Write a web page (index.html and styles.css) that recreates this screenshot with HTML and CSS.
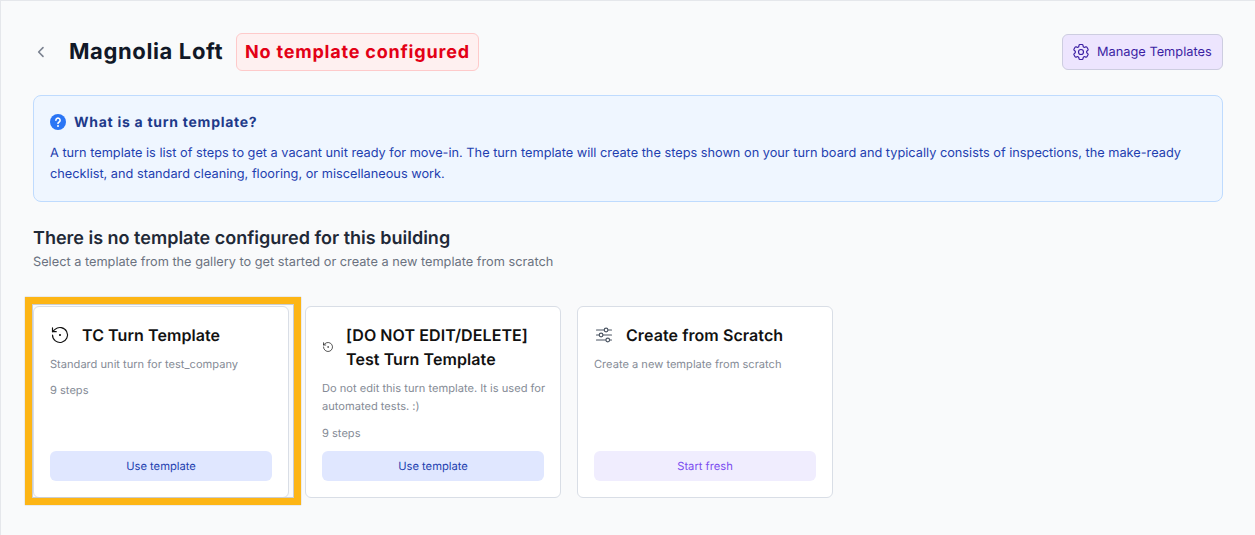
FILE: index.html
```html
<!DOCTYPE html>
<html lang="en">
<head>
<meta charset="utf-8">
<title>Magnolia Loft</title>
<link rel="stylesheet" href="styles.css">
</head>
<body>
<main class="page">
  <header class="top">
    <div class="top-left">
      <button class="back" aria-label="Back">
        <svg viewBox="0 0 24 24" width="16" height="16" fill="none" stroke="#7b8290" stroke-width="2.4" stroke-linecap="round" stroke-linejoin="round"><path d="M15 5.5 8.5 12l6.5 6.5"/></svg>
      </button>
      <h1 class="title">Magnolia Loft</h1>
      <span class="badge">No template configured</span>
    </div>
    <button class="manage">
      <svg viewBox="0 0 24 24" width="20" height="20" fill="none" stroke="#3b1fa3" stroke-width="1.4" stroke-linecap="round" stroke-linejoin="round"><path d="M9.594 3.94c.09-.542.56-.94 1.11-.94h2.593c.55 0 1.02.398 1.11.94l.213 1.281c.063.374.313.686.645.87.074.04.147.083.22.127.325.196.72.257 1.075.124l1.217-.456a1.125 1.125 0 0 1 1.37.49l1.296 2.247a1.125 1.125 0 0 1-.26 1.431l-1.003.827c-.293.241-.438.613-.43.992a7.723 7.723 0 0 1 0 .255c-.008.378.137.75.43.991l1.004.827c.424.35.534.955.26 1.43l-1.298 2.247a1.125 1.125 0 0 1-1.369.491l-1.217-.456c-.355-.133-.75-.072-1.076.124a6.47 6.47 0 0 1-.22.128c-.331.183-.581.495-.644.869l-.213 1.281c-.09.543-.56.94-1.11.94h-2.594c-.55 0-1.019-.398-1.11-.94l-.213-1.281c-.062-.374-.312-.686-.644-.87a6.52 6.52 0 0 1-.22-.127c-.325-.196-.72-.257-1.076-.124l-1.217.456a1.125 1.125 0 0 1-1.369-.49l-1.297-2.247a1.125 1.125 0 0 1 .26-1.431l1.004-.827c.292-.24.437-.613.43-.991a6.932 6.932 0 0 1 0-.255c.007-.38-.138-.751-.43-.992l-1.004-.827a1.125 1.125 0 0 1-.26-1.43l1.297-2.247a1.125 1.125 0 0 1 1.37-.491l1.216.456c.356.133.751.072 1.076-.124.072-.044.146-.086.22-.128.332-.183.582-.495.644-.869l.214-1.28Z"/><circle cx="12" cy="12" r="3"/></svg>
      <span>Manage Templates</span>
    </button>
  </header>

  <section class="info">
    <div class="info-head">
      <svg viewBox="0 0 16 16" width="16" height="16" class="info-icon"><circle cx="8" cy="8" r="8" fill="#2a75f5"/><path d="M5.9 6.2a2.1 2.1 0 1 1 3.2 1.8c-.7.4-1.1.8-1.1 1.5" fill="none" stroke="#fff" stroke-width="1.6" stroke-linecap="round"/><circle cx="8" cy="12" r="1" fill="#fff"/></svg>
      <h2 class="info-title">What is a turn template?</h2>
    </div>
    <p class="info-text">A turn template is list of steps to get a vacant unit ready for move-in. The turn template will create the steps shown on your turn board and typically consists of inspections, the make-ready checklist, and standard cleaning, flooring, or miscellaneous work.</p>
  </section>

  <section class="intro">
    <h2 class="intro-title">There is no template configured for this building</h2>
    <p class="intro-sub">Select a template from the gallery to get started or create a new template from scratch</p>
  </section>

  <section class="cards">
    <article class="card highlighted">
      <div class="card-head">
        <svg class="card-icon" viewBox="0 0 24 24" fill="none" stroke="#111" stroke-width="1.4" stroke-linecap="round" stroke-linejoin="round"><path d="M3 12a9 9 0 1 0 3-6.7L3 8"/><path d="M3 3.5V8h4.5"/><circle cx="12" cy="12" r=".6"/></svg>
        <h3 class="card-title">TC Turn Template</h3>
      </div>
      <p class="card-desc">Standard unit turn for test_company</p>
      <p class="card-steps">9 steps</p>
      <button class="card-btn use">Use template</button>
    </article>
    <article class="card tall">
      <div class="card-head">
        <svg class="card-icon" viewBox="0 0 24 24" fill="none" stroke="#111" stroke-width="1.4" stroke-linecap="round" stroke-linejoin="round"><path d="M3 12a9 9 0 1 0 3-6.7L3 8"/><path d="M3 3.5V8h4.5"/><circle cx="12" cy="12" r=".6"/></svg>
        <h3 class="card-title">[DO NOT EDIT/DELETE] Test Turn Template</h3>
      </div>
      <p class="card-desc">Do not edit this turn template. It is used for automated tests. :)</p>
      <p class="card-steps">9 steps</p>
      <button class="card-btn use">Use template</button>
    </article>
    <article class="card">
      <div class="card-head">
        <svg class="card-icon" viewBox="0 0 24 24" fill="none" stroke="#4b5563" stroke-width="1.4" stroke-linecap="round" stroke-linejoin="round"><path d="M3 6h9M17 6h4M3 12h3M11 12h10M3 18h11M19 18h2"/><circle cx="14.5" cy="6" r="2.2"/><circle cx="8.5" cy="12" r="2.2"/><circle cx="16.5" cy="18" r="2.2"/></svg>
        <h3 class="card-title">Create from Scratch</h3>
      </div>
      <p class="card-desc">Create a new template from scratch</p>
      <button class="card-btn fresh">Start fresh</button>
    </article>
  </section>
</main>
</body>
</html>
```

FILE: styles.css
```css
* { box-sizing: border-box; }
html, body { margin: 0; height: 100%; }
body {
  font-family: Inter, "Liberation Sans", sans-serif;
  background: #f9fafb;
  overflow: hidden;
  text-rendering: geometricPrecision;
}
h1, h2, h3, p { margin: 0; }
button { font-family: inherit; cursor: pointer; text-rendering: inherit; }

.page {
  height: 535px;
  padding: 32px 32px 0 32px;
  border-top: 1px solid #e5e7eb;
  border-left: 1px solid #e5e7eb;
}

.top {
  display: flex;
  justify-content: space-between;
  align-items: center;
  height: 38px;
}
.top-left { display: flex; align-items: center; }
.back {
  display: flex;
  align-items: center;
  justify-content: flex-start;
  width: 36px;
  padding: 0;
  background: none;
  border: 0;
}
.title {
  font-size: 22px;
  font-weight: 700;
  letter-spacing: 0.62px;
  line-height: 38px;
  color: #111827;
  width: 167px;
  white-space: nowrap;
}
.badge {
  height: 38px;
  padding: 0 8px;
  display: flex;
  align-items: center;
  border: 1px solid #fecaca;
  border-radius: 6px;
  background: #fef0f0;
  color: #e30016;
  font-size: 18px;
  font-weight: 700;
  letter-spacing: 0.8px;
  white-space: nowrap;
}
.manage {
  display: flex;
  align-items: center;
  gap: 6px;
  height: 36px;
  width: 161px;
  padding: 0 8px;
  border: 1px solid #cdcde0;
  border-radius: 6px;
  background: #ede5fe;
  color: #3b1fa3;
  font-size: 12.8px;
  white-space: nowrap;
}

.info {
  margin-top: 24px;
  height: 107px;
  padding: 16px;
  border: 1px solid #bfdbfe;
  border-radius: 8px;
  background: #eff6ff;
}
.info-head { display: flex; align-items: center; gap: 8px; height: 20px; }
.info-icon { flex-shrink: 0; }
.info-title { font-size: 14px; font-weight: 700; letter-spacing: 0.73px; color: #1e3a8a; }
.info-text {
  margin-top: 12px;
  font-size: 12.75px;
  line-height: 20.8px;
  color: #1e40af;
}

.intro { margin-top: 25px; }
.intro-title { font-size: 18px; font-weight: 600; line-height: 24px; color: #1f2937; }
.intro-sub { margin-top: 2px; font-size: 12.75px; line-height: 20px; color: #6b7280; }

.cards {
  margin-top: 33px;
  display: grid;
  grid-template-columns: repeat(3, 256px);
  gap: 16px;
}
.card {
  position: relative;
  display: flex;
  flex-direction: column;
  padding: 16px;
  background: #fff;
  border: 1px solid #d9dee6;
  border-radius: 6px;
}
.highlighted::before {
  content: "";
  position: absolute;
  inset: -10px -13px -8px -9px;
  border: 7px solid #fdb515;
  box-shadow: 0 0 1px 0 rgba(0, 0, 0, 0.35), inset 0 0 0 1px #c9cdd3;
  pointer-events: none;
}
.card-head { display: flex; align-items: center; gap: 12px; }
.card-icon { width: 20px; height: 20px; }
.card-title {
  flex: 1 0 auto;
  max-width: calc(100% - 24px);
  font-size: 16px;
  font-weight: 600;
  letter-spacing: 0.08px;
  line-height: 24px;
  color: #111;
}
.card-desc { margin-top: 8px; margin-right: -4px; font-size: 11.1px; line-height: 18px; color: #858b96; }
.card-steps { margin-top: 8px; font-size: 11.1px; line-height: 18px; color: #858b96; }
.card-btn {
  margin-top: auto;
  height: 30px;
  border: 0;
  border-radius: 6px;
  font-size: 11.2px;
}
.use { background: #e0e7ff; color: #1e40af; }
.fresh { background: #f0edfe; color: #7c4df0; }
.tall .card-steps { margin-top: 9px; }
.tall .card-btn { margin-top: 9px; }
```
